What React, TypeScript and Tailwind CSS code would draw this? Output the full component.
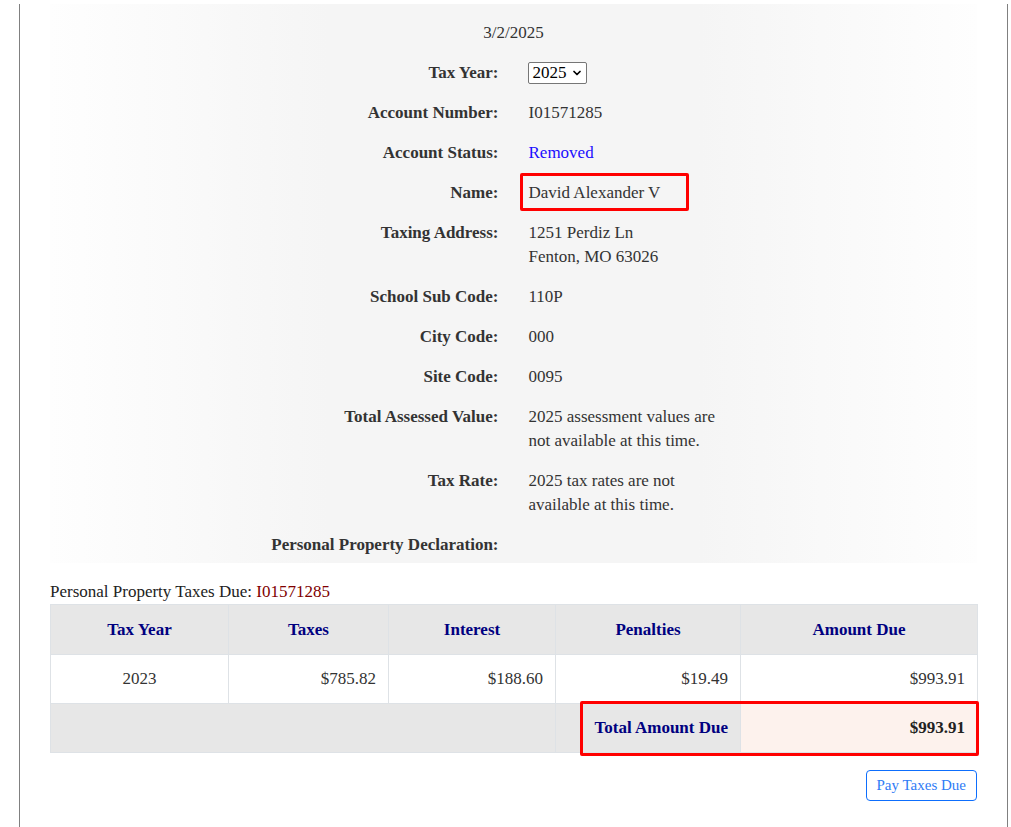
import { ChevronDown } from 'lucide-react'

const rows: { label: string; value: React.ReactNode }[] = [
  { label: 'Account Number:', value: 'I01571285' },
  { label: 'Account Status:', value: <span className="text-[#1a0dff]">Removed</span> },
  {
    label: 'Name:',
    value: (
      <span className="relative inline-block">
        David Alexander V
        <span className="absolute -left-[9px] -top-[8px] -right-[29px] -bottom-[6px] border-[3px] border-[#ff0000] rounded-[2px]" />
      </span>
    ),
  },
  {
    label: 'Taxing Address:',
    value: (
      <>
        1251 Perdiz Ln
        <br />
        Fenton, MO 63026
      </>
    ),
  },
  { label: 'School Sub Code:', value: '110P' },
  { label: 'City Code:', value: '000' },
  { label: 'Site Code:', value: '0095' },
  { label: 'Total Assessed Value:', value: '2025 assessment values are not available at this time.' },
  { label: 'Tax Rate:', value: '2025 tax rates are not available at this time.' },
  { label: 'Personal Property Declaration:', value: '' },
]

function AccountPanel() {
  return (
    <div className="mt-1 pt-[17px] pb-[6px] bg-[linear-gradient(to_right,#fefefe,#f5f5f5_30%,#f5f5f5_70%,#fefefe)]">
      <div className="text-center leading-6 mb-4">3/2/2025</div>
      <div className="grid grid-cols-2 gap-x-[30px] gap-y-4 leading-6">
        <div className="text-right font-bold">Tax Year:</div>
        <div>
          <span className="inline-flex items-center gap-[4px] h-[22px] mt-px -ml-px border border-[#767676] rounded-[2px] bg-white pl-[4px] pr-[3px] text-black leading-5">
            2025
            <ChevronDown className="h-3 w-3" strokeWidth={3.5} />
          </span>
        </div>
        {rows.map((r) => (
          <div key={r.label} className="contents">
            <div className="text-right font-bold">{r.label}</div>
            <div className="max-w-[200px]">{r.value}</div>
          </div>
        ))}
      </div>
    </div>
  )
}

function TaxesTable() {
  const th = 'border border-[#dee2e6] px-3 text-center font-bold text-[#000080]'
  const td = 'border border-[#dee2e6] px-3'
  return (
    <div className="mt-[17px]">
      <div className="leading-6 text-[#222]">
        Personal Property Taxes Due: <span className="text-[#800000]">I01571285</span>
      </div>
      <div className="relative">
        <table className="w-full table-fixed border-collapse">
          <colgroup>
            <col className="w-[178px]" />
            <col className="w-[160px]" />
            <col className="w-[167px]" />
            <col className="w-[185px]" />
            <col className="w-[237px]" />
          </colgroup>
          <thead>
            <tr className="h-[50px] bg-[#e7e7e7]">
              <th className={th}>Tax Year</th>
              <th className={th}>Taxes</th>
              <th className={th}>Interest</th>
              <th className={th}>Penalties</th>
              <th className={th}>Amount Due</th>
            </tr>
          </thead>
          <tbody>
            <tr className="h-[49px] bg-white">
              <td className={`${td} text-center`}>2023</td>
              <td className={`${td} text-right`}>$785.82</td>
              <td className={`${td} text-right`}>$188.60</td>
              <td className={`${td} text-right`}>$19.49</td>
              <td className={`${td} text-right`}>$993.91</td>
            </tr>
            <tr className="h-[49px] bg-[#e7e7e7]">
              <td className={td} colSpan={3} />
              <td className={`${td} text-right font-bold text-[#000080]`}>Total Amount Due</td>
              <td className={`${td} text-right font-bold text-[#222] bg-[#fdf2ed]`}>$993.91</td>
            </tr>
          </tbody>
        </table>
        <div className="absolute left-[530px] top-[97px] w-[399px] h-[55px] border-[3px] border-[#ff0000] rounded-[2px]" />
      </div>
      <div className="flex justify-end mt-[17px]">
        <button className="border border-[#0d6efd] rounded-[4px] px-[10px] py-[4px] text-[15px] leading-[21px] text-[#2f7cf6] bg-white">
          Pay Taxes Due
        </button>
      </div>
    </div>
  )
}

export default function App() {
  return (
    <div className="min-h-screen bg-white font-['Liberation_Serif',serif] text-[17px] text-[#333]">
      <div className="ml-[19px] w-[989px] min-h-[827px] border-x border-[#808080] px-[30px]">
        <AccountPanel />
        <TaxesTable />
      </div>
    </div>
  )
}
